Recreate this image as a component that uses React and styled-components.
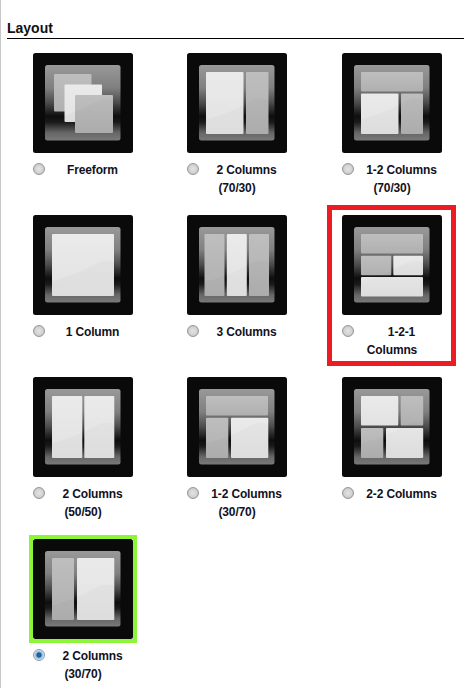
import styled, { createGlobalStyle } from 'styled-components'

const layouts = [
  { id: 'freeform', label: ['Freeform'], tiles: [[21, 21, 37.5, 37.5], [31.5, 31.5, 37.5, 37.5, true], [42, 42, 38, 38]] },
  { id: 'c7030', label: ['2 Columns', '(70/30)'], tiles: [[19, 19, 37.5, 62, true], [59, 19, 22.5, 62]] },
  { id: 'r7030', label: ['1-2 Columns', '(70/30)'], tiles: [[19, 19, 62, 19.5], [19, 40.5, 37.5, 40.5, true], [59, 40.5, 22, 40.5]] },
  { id: 'one', label: ['1 Column'], tiles: [[19, 19, 62, 62, true]] },
  { id: 'three', label: ['3 Columns'], tiles: [[17.5, 19, 20, 62], [39.8, 19, 20, 62, true], [62, 19, 20, 62]] },
  {
    id: 'r121',
    label: ['1-2-1', 'Columns'],
    marked: true,
    tiles: [[19, 19, 62, 19.5], [19, 40.7, 30.3, 19.5], [51.3, 40.7, 29.7, 19.5, true], [19, 62, 62, 19.5, true]],
  },
  { id: 'c5050', label: ['2 Columns', '(50/50)'], tiles: [[19, 19, 30.3, 62, true], [51.3, 19, 30, 62, true]] },
  { id: 'r3070', label: ['1-2 Columns', '(30/70)'], tiles: [[19, 19, 62, 19.5], [19, 40.7, 22.3, 40.3], [44, 40.7, 37.3, 40.3, true]] },
  {
    id: 'r22',
    label: ['2-2 Columns'],
    tiles: [[19, 19, 37.3, 29.5, true], [58.7, 19, 22.5, 29.5], [19, 51, 22.3, 30], [44, 51, 37.2, 30, true]],
  },
  { id: 'c3070', label: ['2 Columns', '(30/70)'], selected: true, tiles: [[19, 19, 22, 62], [44, 19, 37.3, 62, true]] },
]

function LayoutIcon({ id, tiles }) {
  return (
    <IconSvg viewBox="0 0 100 100">
      <defs>
        <linearGradient id={`${id}-panel`} x1="0" y1="0" x2="0" y2="1">
          <stop offset="0" stopColor="#999999" />
          <stop offset="0.3" stopColor="#808080" />
          <stop offset="0.5" stopColor="#4c4c4c" />
          <stop offset="0.68" stopColor="#0e0e0e" />
          <stop offset="0.76" stopColor="#1c1c1c" />
          <stop offset="0.9" stopColor="#6a6a6a" />
          <stop offset="1" stopColor="#7c7c7c" />
        </linearGradient>
        <linearGradient id={`${id}-light`} x1="0" y1="0" x2="0" y2="1">
          <stop offset="0" stopColor="#eaeaea" />
          <stop offset="1" stopColor="#e2e2e2" />
        </linearGradient>
        <linearGradient id={`${id}-dark`} x1="0" y1="0" x2="0" y2="1">
          <stop offset="0" stopColor="#bebebe" />
          <stop offset="1" stopColor="#b0b0b0" />
        </linearGradient>
      </defs>
      <rect width="100" height="100" rx="2.5" fill="#0a0a0a" />
      <rect x="12" y="12" width="75.5" height="75.5" rx="2.5" fill={`url(#${id}-panel)`} />
      {tiles.map(([x, y, w, h, light], i) => (
        <rect key={i} x={x} y={y} width={w} height={h} rx="1" fill={`url(#${id}-${light ? 'light' : 'dark'})`} />
      ))}
      <path d="M12 68 Q40 62 66 47 Q80 42 87.5 54 V85 Q87.5 87.5 85 87.5 H14.5 Q12 87.5 12 85 Z" fill="#000000" opacity="0.02" />
    </IconSvg>
  )
}

export default function App() {
  return (
    <Page>
      <GlobalStyle />
      <Title>Layout</Title>
      <Options>
        {layouts.map((layout) => (
          <Option key={layout.id}>
            {layout.marked && <Marker />}
            <IconFrame $selected={layout.selected}>
              <LayoutIcon id={layout.id} tiles={layout.tiles} />
            </IconFrame>
            <OptionLabel>
              <Radio type="radio" name="layout" defaultChecked={layout.selected} />
              {layout.label.map((line, i) => (
                <span key={i}>
                  {i > 0 && <br />}
                  {line}
                </span>
              ))}
            </OptionLabel>
          </Option>
        ))}
      </Options>
    </Page>
  )
}

const GlobalStyle = createGlobalStyle`
  body {
    margin: 0;
    background: #ffffff;
    font-family: "Liberation Sans", Arial, sans-serif;
  }
`

const Page = styled.div`
  width: 464px;
  height: 688px;
  box-sizing: border-box;
  overflow: hidden;
  padding: 20px 0 0 6px;
  border-left: 1px solid #c8c8c8;
`

const Title = styled.h2`
  margin: 0;
  height: 18px;
  border-bottom: 1px solid #000000;
  font-size: 14px;
  line-height: 16px;
  font-weight: bold;
  color: #111111;
`

const Options = styled.div`
  display: grid;
  grid-template-columns: 154px 155px 100px;
  grid-auto-rows: 162px;
  padding: 14px 0 0 26px;
`

const Option = styled.div`
  position: relative;
  width: 100px;
`

const Marker = styled.div`
  position: absolute;
  top: -10px;
  left: -15px;
  width: 129px;
  height: 161px;
  box-sizing: border-box;
  border: 5px solid #ed1c24;
`

const IconFrame = styled.div`
  width: 100px;
  height: 100px;
  outline: ${(props) => (props.$selected ? '4px solid #8cf53a' : 'none')};
`

const IconSvg = styled.svg`
  display: block;
  width: 100px;
  height: 100px;
`

const OptionLabel = styled.label`
  display: block;
  margin-top: 8px;
  font-size: 12px;
  line-height: 18px;
  font-weight: bold;
  text-align: center;
  letter-spacing: -0.15px;
  color: #111122;
`

const Radio = styled.input`
  appearance: none;
  float: left;
  width: 12px;
  height: 12px;
  margin: 2px 7px 0 0;
  border: 1px solid #979797;
  border-radius: 50%;
  box-sizing: border-box;
  background: radial-gradient(circle at 50% 50%, #e4e4e4 0, #d2d2d2 55%, #b2b2b2 100%);

  &:checked {
    border-color: #8a9aa8;
    background: radial-gradient(circle at 50% 50%, #1c6fc0 0, #0f5a9e 28%, #7fb0d8 42%, #e4e8ec 70%, #c8ccd0 100%);
  }
`
